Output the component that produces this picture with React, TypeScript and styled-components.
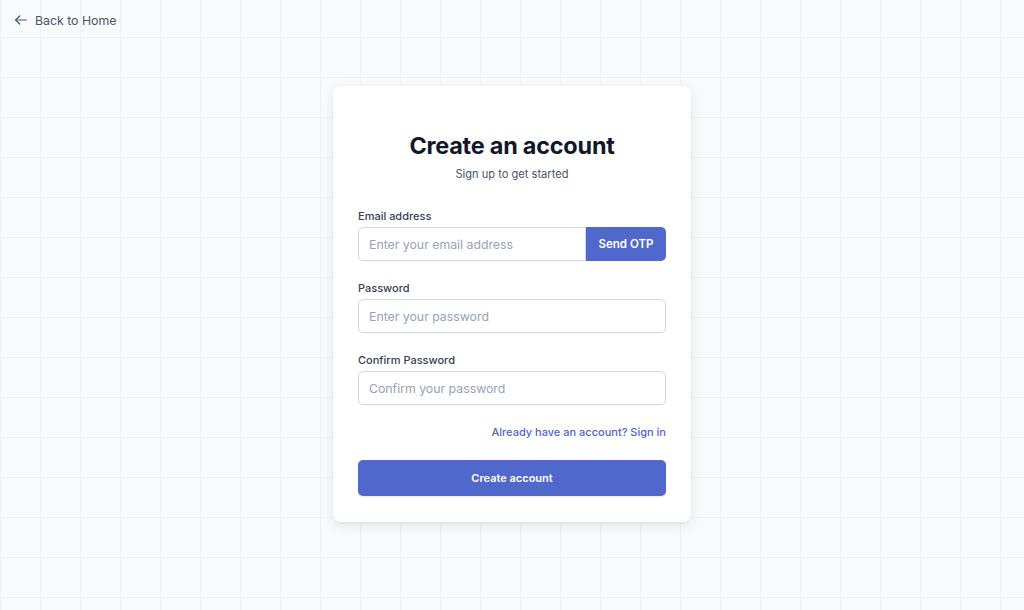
import React, { useState } from "react";
import styled, { createGlobalStyle } from "styled-components";

const GlobalStyle = createGlobalStyle`
  * { box-sizing: border-box; }
  html, body {
    margin: 0;
    padding: 0;
  }
  body {
    font-family: Inter, "Noto Sans", "Liberation Sans", sans-serif;
    background-color: #f8fafc;
  }
`;

function App() {
  const [email, setEmail] = useState("");
  const [password, setPassword] = useState("");
  const [confirm, setConfirm] = useState("");

  const handleSubmit = (e: React.FormEvent) => {
    e.preventDefault();
  };

  return (
    <Page>
      <GlobalStyle />
      <TopBar>
        <BackLink href="#">
          <svg viewBox="0 0 24 24" fill="none" stroke="currentColor" strokeWidth="1.8" strokeLinecap="round" strokeLinejoin="round">
            <path d="M20 12H4" />
            <path d="M10 18l-6-6 6-6" />
          </svg>
          Back to Home
        </BackLink>
      </TopBar>
      <Center>
        <Card onSubmit={handleSubmit}>
          <Title>Create an account</Title>
          <Subtitle>Sign up to get started</Subtitle>

          <Field>
            <Label htmlFor="email">Email address</Label>
            <InputGroup>
              <Input
                id="email"
                type="email"
                placeholder="Enter your email address"
                value={email}
                onChange={(e) => setEmail(e.target.value)}
                $grouped
              />
              <OtpButton type="button">Send OTP</OtpButton>
            </InputGroup>
          </Field>

          <Field>
            <Label htmlFor="password">Password</Label>
            <Input
              id="password"
              type="password"
              placeholder="Enter your password"
              value={password}
              onChange={(e) => setPassword(e.target.value)}
            />
          </Field>

          <Field>
            <Label htmlFor="confirm">Confirm Password</Label>
            <Input
              id="confirm"
              type="password"
              placeholder="Confirm your password"
              value={confirm}
              onChange={(e) => setConfirm(e.target.value)}
            />
          </Field>

          <LinkRow>
            <SignInLink href="#">Already have an account? Sign in</SignInLink>
          </LinkRow>

          <SubmitButton type="submit">Create account</SubmitButton>
        </Card>
      </Center>
    </Page>
  );
}

export default App;

const Page = styled.div`
  min-height: 610px;
  width: 100%;
  background-color: #f8fafc;
  background-image: linear-gradient(to right, #eef1f4 1px, transparent 1px),
    linear-gradient(to bottom, #eef1f4 1px, transparent 1px);
  background-size: 40px 40px;
  background-position: 0 -3px;
  display: flex;
  flex-direction: column;
`;

const TopBar = styled.div`
  height: 40px;
  padding: 0 13px;
  display: flex;
  align-items: center;
`;

const BackLink = styled.a`
  display: flex;
  align-items: center;
  gap: 6px;
  font-size: 12.3px;
  color: #475569;
  text-decoration: none;
  svg {
    width: 16px;
    height: 16px;
  }
`;

const Center = styled.div`
  display: flex;
  justify-content: center;
  padding-top: 46px;
`;

const Card = styled.form`
  width: 358px;
  background: #ffffff;
  border-radius: 8px;
  box-shadow: 0 4px 14px rgba(15, 23, 42, 0.08), 0 1px 3px rgba(15, 23, 42, 0.06);
  padding: 44px 25px 26px;
  display: flex;
  flex-direction: column;
`;

const Title = styled.h1`
  margin: 0;
  text-align: center;
  font-size: 23.4px;
  line-height: 32px;
  font-weight: 700;
  color: #0f172a;
  letter-spacing: -0.2px;
`;

const Subtitle = styled.p`
  margin: 4px 0 0;
  text-align: center;
  font-size: 11.1px;
  line-height: 16px;
  color: #475569;
`;

const Field = styled.div`
  display: flex;
  flex-direction: column;
  margin-top: 26px;
  & + & {
    margin-top: 19px;
  }
`;

const Label = styled.label`
  font-size: 11px;
  line-height: 16px;
  font-weight: 500;
  color: #334155;
  margin-bottom: 3px;
`;

const InputGroup = styled.div`
  display: flex;
`;

const Input = styled.input<{ $grouped?: boolean }>`
  flex: ${(p) => (p.$grouped ? "1 1 auto" : "0 0 auto")};
  min-width: 0;
  width: 100%;
  height: 34px;
  padding: 0 10px;
  border: 1px solid #d4d9e0;
  border-radius: ${(p) => (p.$grouped ? "5px 0 0 5px" : "5px")};
  box-shadow: 0 1px 2px rgba(15, 23, 42, 0.05);
  font-family: inherit;
  font-size: 12.3px;
  color: #0f172a;
  outline: none;
  &::placeholder {
    color: #94a3b8;
  }
`;

const OtpButton = styled.button`
  flex: 0 0 80px;
  height: 34px;
  border: none;
  border-radius: 0 5px 5px 0;
  background-color: #5068cc;
  color: #ffffff;
  font-family: inherit;
  font-size: 11.5px;
  font-weight: 600;
  cursor: pointer;
`;

const LinkRow = styled.div`
  display: flex;
  justify-content: flex-end;
  margin-top: 19px;
`;

const SignInLink = styled.a`
  font-size: 11px;
  line-height: 16px;
  font-weight: 500;
  color: #4f63d2;
  text-decoration: none;
`;

const SubmitButton = styled.button`
  margin-top: 20px;
  height: 36px;
  width: 100%;
  border: none;
  border-radius: 5px;
  background-color: #5068cc;
  color: #ffffff;
  font-family: inherit;
  font-size: 11px;
  font-weight: 600;
  cursor: pointer;
  box-shadow: 0 1px 2px rgba(15, 23, 42, 0.1);
`;
